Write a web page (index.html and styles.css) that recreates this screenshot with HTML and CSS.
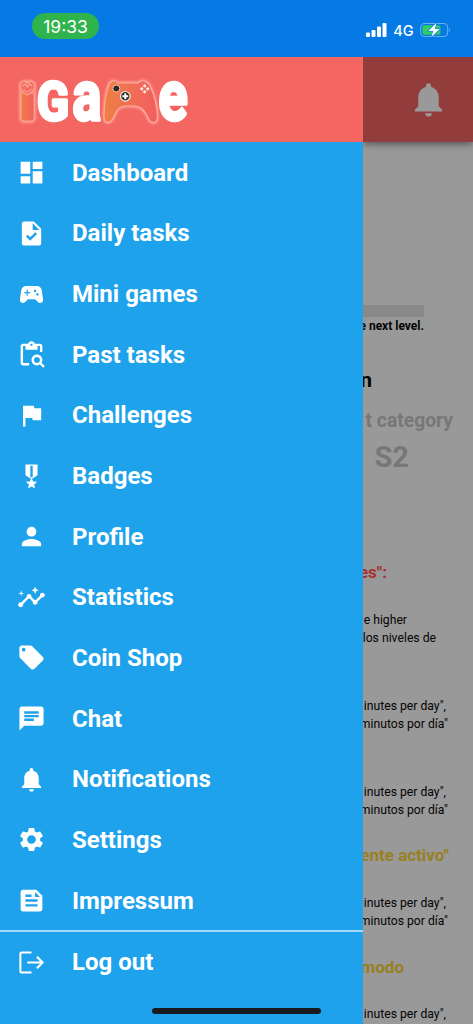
FILE: index.html
```html
<!DOCTYPE html>
<html lang="en">
<head>
<meta charset="utf-8">
<title>iGame</title>
<link rel="stylesheet" href="styles.css">
</head>
<body>
<div class="phone">
  <header class="status">
    <span class="clock">19:33</span>
    <div class="signals">
      <svg class="bars" viewBox="0 0 21 14"><rect x="0" y="9.500" width="4" height="4.500" rx="1"/><rect x="5.500" y="7" width="4" height="7" rx="1"/><rect x="11" y="3.500" width="4" height="10.500" rx="1"/><rect x="16.500" y="0" width="4" height="14" rx="1"/></svg>
      <span class="network">4G</span>
      <svg class="battery" viewBox="0 0 31 16"><rect x=".7" y="1.500" width="27" height="13" rx="4" fill="none" stroke="#69afef" stroke-width="1.100"/><rect x="2.500" y="3.300" width="18" height="9.500" rx="2" fill="#31cd63"/><path d="M29 6q2 2 0 4z" fill="#69afef"/><path d="M16.500.8 8.300 9h5l-2.100 6.300L19.800 7h-5z" fill="#fff" stroke="#057ae4" stroke-width="1.200" paint-order="stroke"/></svg>
    </div>
  </header>
  <div class="body">
    <aside class="drawer">
      <div class="brand">
        <svg class="logo" viewBox="0 0 176 52">
          <defs>
            <linearGradient id="warm" x1="0" x2="1"><stop offset="0" stop-color="#ee8042"/><stop offset=".45" stop-color="#f07053"/><stop offset="1" stop-color="#f25f60"/></linearGradient>
            <filter id="glow" x="-20%" y="-20%" width="140%" height="140%"><feGaussianBlur stdDeviation=".8"/></filter>
          </defs>
          <g fill="none" stroke="#ff9c91" stroke-width="3" filter="url(#glow)"><rect x="6.500" y="6.500" width="14" height="40" rx="4"/><path transform="translate(7.200 0) scale(.92 1)" d="M96 8 99 6q4-1 6 2h22q3-3 7-2l5 3q9 17 9 34c-1 6-7 6-10 0-4-8-8-12-16-12h-8c-8 0-11 5-14 12-4 7-10 5-10-1q0-20 6-34z"/></g>
          <rect x="7" y="18" width="13" height="28" rx="2" fill="url(#warm)" stroke="#ffae9d" stroke-width=".8"/>
          <path d="M13.500 20C7.500 17 5.500 13 6.500 9q3-5 7-1 4-4 7 1c1 4-1 8-7 11zM8.500 11l3-2 2 3 2-3 3 2M9.500 14q4 5 8 0" fill="#f46f62" stroke="#ffa797" stroke-width="1.200"/>
          <path transform="translate(7.200 0) scale(.92 1)" d="M96 8 99 6q4-1 6 2h22q3-3 7-2l5 3q9 17 9 34c-1 6-7 6-10 0-4-8-8-12-16-12h-8c-8 0-11 5-14 12-4 7-10 5-10-1q0-20 6-34z" fill="url(#warm)" stroke="#ffad9f" stroke-width="1.200"/>
          <circle cx="102.300" cy="13.500" r="3.500" fill="#292827" stroke="#ffc4ac" stroke-width="1"/>
          <circle cx="111.300" cy="21.300" r="4.800" fill="#292827" stroke="#fff0df" stroke-width="1.200"/>
          <path d="M111.300 18.300v6m-3-3h6" stroke="#fff" stroke-width="2"/>
          <g fill="#ffe7df"><circle cx="130.700" cy="10.800" r="1.600"/><circle cx="130.700" cy="16.800" r="1.600"/><circle cx="127.700" cy="13.800" r="1.600"/><circle cx="133.700" cy="13.800" r="1.600"/></g>
          <g class="wordmark"><text transform="translate(23 45) scale(.87 1)" font-size="54">G</text><text transform="translate(58.500 45) scale(.77 1)" font-size="70">a</text><text transform="translate(144.500 45) scale(.77 1)" font-size="70">e</text></g>
        </svg>
      </div>
      <nav class="menu">
        <a class="item"><svg viewBox="0 0 24 24"><path d="M3 13h8V3H3v10zm0 8h8v-6H3v6zm10 0h8V11h-8v10zm0-18v6h8V3h-8z"/></svg>Dashboard</a>
        <a class="item"><svg viewBox="0 0 24 24"><path d="M14 2H6c-1.100 0-2 .9-2 2v16c0 1.100.9 2 2 2h12c1.100 0 2-.9 2-2V8l-6-6zm-3.060 16L7.400 14.460l1.410-1.410 2.120 2.120 4.240-4.240 1.410 1.410L10.940 18zM13 9V3.500L18.500 9H13z"/></svg>Daily tasks</a>
        <a class="item"><svg viewBox="0 0 24 24"><path d="M21.580 16.090l-1.090-7.660C20.210 6.460 18.520 5 16.530 5H7.470C5.480 5 3.790 6.460 3.510 8.430l-1.090 7.660C2.200 17.630 3.390 19 4.940 19c.68 0 1.320-.27 1.800-.75L9 16h6l2.250 2.250c.48.48 1.130.75 1.800.75 1.560 0 2.750-1.370 2.530-2.910zM11 11H9v2H8v-2H6v-1h2V8h1v2h2v1zm4-1c-.55 0-1-.45-1-1s.45-1 1-1 1 .45 1 1-.45 1-1 1zm2 3c-.55 0-1-.45-1-1s.45-1 1-1 1 .45 1 1-.45 1-1 1z"/></svg>Mini games</a>
        <a class="item"><svg viewBox="0 0 24 24"><path d="M5 5h2v3h10V5h2v5h2V5c0-1.100-.9-2-2-2h-4.180C14.400 1.840 13.300 1 12 1s-2.400.84-2.820 2H5c-1.100 0-2 .9-2 2v14c0 1.100.9 2 2 2h5v-2H5V5zm7-2c.55 0 1 .45 1 1s-.45 1-1 1-1-.45-1-1 .45-1 1-1z"/><path d="M20.300 18.900c.4-.7.7-1.500.7-2.400 0-2.500-2-4.500-4.500-4.500S12 14 12 16.500s2 4.500 4.500 4.500c.9 0 1.700-.3 2.400-.7l2.700 2.700 1.400-1.400-2.700-2.700zm-3.800.1c-1.400 0-2.500-1.100-2.500-2.500s1.100-2.500 2.500-2.500 2.500 1.100 2.500 2.500-1.100 2.500-2.500 2.500z"/></svg>Past tasks</a>
        <a class="item"><svg viewBox="0 0 24 24"><path d="M14.400 6L14 4H5v17h2v-7h5.600l.4 2h7V6z"/></svg>Challenges</a>
        <a class="item"><svg viewBox="0 0 24 24"><path d="M17 10.430V2H7v8.430c0 .35.180.68.490.86l4.180 2.510-.99 2.340-3.410.29 2.590 2.240L9.070 22 12 20.230 14.930 22l-.78-3.330 2.590-2.240-3.410-.29-.99-2.340 4.180-2.510c.3-.18.480-.5.480-.86zm-4 1.800l-1 .6-1-.6V3h2v9.230z"/></svg>Badges</a>
        <a class="item"><svg viewBox="0 0 24 24"><path d="M12 12c2.210 0 4-1.790 4-4s-1.790-4-4-4-4 1.790-4 4 1.790 4 4 4zm0 2c-2.670 0-8 1.340-8 4v2h16v-2c0-2.660-5.330-4-8-4z"/></svg>Profile</a>
        <a class="item"><svg viewBox="0 0 24 24"><path d="M21 8c-1.450 0-2.260 1.440-1.930 2.510l-3.550 3.560c-.3-.09-.74-.09-1.040 0l-2.550-2.550C12.270 10.450 11.460 9 10 9c-1.450 0-2.270 1.440-1.930 2.520l-4.560 4.550C2.440 15.740 1 16.550 1 18c0 1.100.9 2 2 2 1.450 0 2.260-1.440 1.930-2.510l4.550-4.560c.3.090.74.090 1.040 0l2.550 2.550C12.730 16.550 13.540 18 15 18c1.450 0 2.270-1.440 1.930-2.520l3.560-3.550C21.560 12.260 23 11.450 23 10c0-1.100-.9-2-2-2z"/><path d="M15 9l.94-2.070L18 6l-2.060-.93L15 3l-.92 2.070L12 6l2.080.93zM3.500 11L4 9l2-.5L4 8l-.5-2L3 8l-2 .5L3 9z"/></svg>Statistics</a>
        <a class="item"><svg viewBox="0 0 24 24"><path d="M21.410 11.580l-9-9C12.050 2.220 11.550 2 11 2H4c-1.100 0-2 .9-2 2v7c0 .55.220 1.050.59 1.420l9 9c.36.360.86.580 1.410.580s1.050-.22 1.410-.59l7-7c.37-.36.590-.86.590-1.410s-.23-1.060-.59-1.420zM5.500 7C4.670 7 4 6.330 4 5.500S4.670 4 5.500 4 7 4.670 7 5.500 6.330 7 5.500 7z"/></svg>Coin Shop</a>
        <a class="item"><svg viewBox="0 0 24 24"><path d="M20 2H4c-1.100 0-1.990.9-1.990 2L2 22l4-4h14c1.100 0 2-.9 2-2V4c0-1.100-.9-2-2-2zM6 9h12v2H6V9zm8 5H6v-2h8v2zm4-6H6V6h12v2z"/></svg>Chat</a>
        <a class="item"><svg viewBox="0 0 24 24"><path d="M12 22c1.100 0 2-.9 2-2h-4c0 1.100.89 2 2 2zm6-6v-5c0-3.070-1.640-5.640-4.500-6.320V4c0-.83-.67-1.500-1.500-1.500s-1.500.67-1.500 1.500v.68C7.630 5.360 6 7.920 6 11v5l-2 2v1h16v-1l-2-2z"/></svg>Notifications</a>
        <a class="item"><svg viewBox="0 0 24 24"><path d="M19.140 12.940c.04-.3.060-.61.060-.94 0-.32-.02-.64-.07-.94l2.030-1.580c.18-.14.230-.41.120-.61l-1.920-3.320c-.12-.22-.37-.29-.59-.22l-2.390.96c-.5-.38-1.030-.7-1.620-.94l-.36-2.540c-.04-.24-.24-.41-.48-.41h-3.840c-.24 0-.43.170-.47.410l-.36 2.540c-.59.240-1.130.57-1.620.94l-2.390-.96c-.22-.08-.47 0-.59.220L2.740 8.870c-.12.210-.08.470.12.610l2.030 1.580c-.05.300-.09.630-.09.940s.02.640.07.940l-2.030 1.580c-.18.140-.23.410-.12.610l1.920 3.320c.12.220.37.290.59.220l2.390-.96c.5.380 1.030.7 1.620.94l.36 2.540c.05.240.24.410.48.410h3.840c.24 0 .44-.17.470-.41l.36-2.540c.59-.24 1.130-.56 1.620-.94l2.390.96c.22.080.47 0 .59-.22l1.920-3.320c.12-.22.070-.47-.12-.61l-2.010-1.580zM12 15.600c-1.980 0-3.600-1.620-3.600-3.600s1.620-3.600 3.600-3.600 3.600 1.620 3.600 3.600-1.620 3.600-3.600 3.600z"/></svg>Settings</a>
        <a class="item"><svg viewBox="0 0 24 24"><path fill-rule="evenodd" d="M16 3H5c-1.100 0-2 .9-2 2v14c0 1.100.9 2 2 2h14c1.100 0 2-.9 2-2V8l-5-5zM7 7h5v2H7V7zm10 10H7v-2h10v2zm0-4H7v-2h10v2zm-2-4V5l4 4h-4z"/></svg>Impressum</a>
        <a class="item logout"><svg viewBox="0 0 24 24"><path d="M12 3.800H3.800q-1 0-1 1v14.400q0 1 1 1H12M8.500 12H21.500M16.500 7.300l4.700 4.700-4.700 4.700" fill="none" stroke="#fff" stroke-width="1.700"/></svg>Log out</a>
      </nav>
      <div class="home"></div>
    </aside>
    <main class="page">
      <div class="appbar"><svg viewBox="0 0 24 24"><path d="M12 22c1.100 0 2-.9 2-2h-4c0 1.100.89 2 2 2zm6-6v-5c0-3.070-1.640-5.640-4.500-6.320V4c0-.83-.67-1.500-1.500-1.500s-1.500.67-1.500 1.500v.68C7.630 5.360 6 7.920 6 11v5l-2 2v1h16v-1l-2-2z"/></svg></div>
      <div class="progress"></div>
      <p class="line next">e next level.</p>
      <p class="line title">n</p>
      <p class="line category">t category</p>
      <p class="line level">S2</p>
      <p class="line rule">es":</p>
      <p class="line higher">e higher</p>
      <p class="line niveles">los niveles de</p>
      <p class="line day first">inutes per day",</p>
      <p class="line dia">minutos por día"</p>
      <p class="line day second">inutes per day",</p>
      <p class="line dia">minutos por día"</p>
      <p class="line gold active">ente activo"</p>
      <p class="line day third">inutes per day",</p>
      <p class="line dia">minutos por día"</p>
      <p class="line gold mode">modo</p>
      <p class="line day third">inutes per day",</p>
    </main>
  </div>
</div>
</body>
</html>
```
FILE: styles.css
```css
* { box-sizing: border-box; }
body { margin: 0; font-family: Roboto, sans-serif; }
.phone { width: 473px; height: 1024px; overflow: hidden; display: flex; flex-direction: column; }
.status { height: 57px; flex: none; background: #057ae4; color: #fff; display: flex; justify-content: space-between; align-items: flex-start; padding: 13px 22px 0 32px; }
.clock { width: 67px; height: 26px; border-radius: 13px; background: #2fb34d; text-align: center; font: 400 17.500px/27px Inter, sans-serif; }
.signals { display: flex; align-items: center; height: 34px; }
.bars { width: 21px; height: 14px; fill: #fff; margin-right: 6px; }
.network { font: 500 14.500px Inter, sans-serif; margin-right: 6.500px; }
.battery { width: 31px; height: 16px; }
.body { display: flex; flex: 1; min-height: 0; }
.drawer { width: 363px; flex: none; background: #1ea2ec; display: flex; flex-direction: column; position: relative; }
.brand { height: 85px; flex: none; background: #f46662; padding: 18px 0 0 14px; }
.logo { display: block; width: 176px; height: 52px; }
.wordmark { fill: #fff; stroke: #fff; stroke-width: 3.500px; stroke-linejoin: round; font-family: Roboto, sans-serif; font-weight: 700; }
.menu { display: flex; flex-direction: column; }
.item { height: 60.650px; display: flex; align-items: center; gap: 26px; padding: 1px 0 0 17px; color: #fff; font-size: 24px; font-weight: 700; }
.item svg { width: 29px; height: 29px; fill: #fff; flex: none; }
.logout { border-top: 2px solid #a3dafa; height: 62px; padding-top: 0; }
.home { position: absolute; left: 152px; bottom: 10px; width: 169px; height: 6px; border-radius: 3px; background: #171b1f; }
.page { flex: 1; min-width: 0; overflow: hidden; background: #999; display: flex; flex-direction: column; color: #050505; }
.appbar { height: 85px; flex: none; background: #923d3b; display: flex; align-items: center; padding-left: 45px; box-shadow: 0 2px 7px rgba(0,0,0,.45); }
.appbar svg { width: 41px; height: 41px; fill: #999; }
.progress { width: 61px; height: 12px; flex: none; background: #898989; margin-top: 163px; }
.line { margin: 0; height: 18px; line-height: 18px; flex: none; display: flex; justify-content: flex-end; white-space: nowrap; font-size: 12.200px; }
.next { padding-right: 49px; font-size: 12px; font-weight: 700; }
.title { height: 24px; line-height: 24px; margin-top: 33px; padding-right: 101px; font-size: 21px; font-weight: 700; }
.category { height: 24px; line-height: 24px; margin-top: 17px; padding-right: 20px; font-size: 19.300px; font-weight: 700; color: #777; }
.level { height: 34px; line-height: 34px; margin-top: 7px; padding-right: 64px; font-size: 29px; font-weight: 700; color: #777; }
.rule { margin-top: 89px; padding-right: 86px; font-size: 17px; font-weight: 700; color: #a7302e; }
.higher { margin-top: 30px; padding-right: 66px; }
.niveles { padding-right: 37px; }
.day { padding-right: 27px; }
.dia { padding-right: 25px; }
.first { margin-top: 50px; }
.second { margin-top: 50px; }
.gold { font-size: 17px; font-weight: 700; color: #978022; }
.active { margin-top: 27px; padding-right: 24px; }
.third { margin-top: 30px; }
.mode { margin-top: 28px; padding-right: 69px; }
.mode + .third { margin-top: 29px; }
```
